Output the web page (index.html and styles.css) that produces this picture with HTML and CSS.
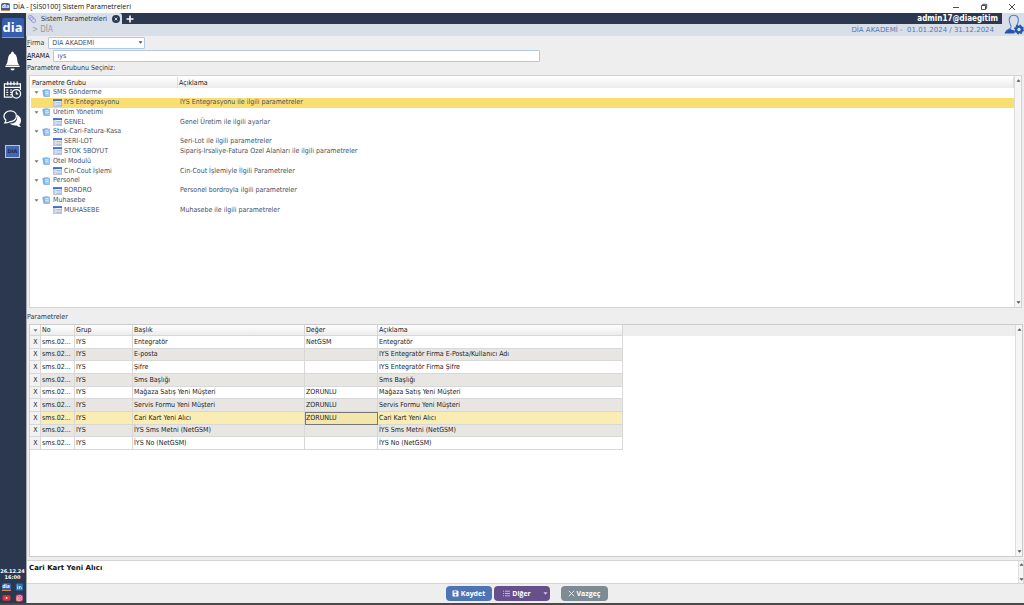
FILE: index.html
```html
<!DOCTYPE html>
<html lang="tr">
<head>
<meta charset="utf-8">
<title>DİA - [SİS0100] Sistem Parametreleri</title>
<link rel="stylesheet" href="styles.css">
</head>
<body>
<svg class="defs" aria-hidden="true">
  <symbol id="i-group" viewBox="0 0 8 8"><path d="M.3 1 5.500 .2 6.500 7 1.500 7.800z" fill="#7fb4ea"/><path d="M2 1h5.700v6.500H2.500z" fill="#9ccaf6" stroke="#5e97d8" stroke-width=".5"/><path d="M3.300 2.800h3M3.500 4.500h3" stroke="#e4f1fd" stroke-width=".8"/></symbol>
  <symbol id="i-table" viewBox="0 0 9 8"><path d="M.3.500h8.400v7.200H.3z" fill="#f2f5fb" stroke="#7f93c6" stroke-width=".6"/><path d="M0 .2h9v1.800H0z" fill="#3f6fd0"/><path d="M.6 2.200h2v5.200h-2z" fill="#c5cce0"/><path d="M3.200 3.500h5.200M3.200 5h5.200M3.200 6.500h5.200" stroke="#97a5cc" stroke-width=".7"/></symbol>
  <symbol id="i-down" viewBox="0 0 6 4"><path d="M.3.300h5.400L3 3.700z" fill="currentColor"/></symbol>
</svg>
<div class="app">
  <header class="titlebar">
    <span class="dia mini">dia</span>
    <h1>DİA - [SİS0100] Sistem Parametreleri</h1>
    <button class="win" aria-label="Simge durumuna küçült"><svg viewBox="0 0 8 8"><path d="M1 4.500h6"/></svg></button>
    <button class="win" aria-label="Önceki boyut"><svg viewBox="0 0 8 8"><path d="M1.500 2.500h4v4h-4zM2.700 2.500V1.300h4v4H5.500"/></svg></button>
    <button class="win" aria-label="Kapat"><svg viewBox="0 0 8 8"><path d="M1 1l6 6M7 1 1 7"/></svg></button>
  </header>
  <div class="frame">
    <nav class="side">
      <a href="#" class="dia logo">dia</a>
      <button aria-label="Bildirimler"><svg viewBox="0 0 20 22"><path d="M10 1q1.500 0 1.500 2 2.800 1 3.200 5.200.3 5.300 2.800 8v1.200h-15v-1.200q2.500-2.700 2.800-8Q5.700 4 8.500 3q0-2 1.500-2z" fill="#fff"/><path d="M2.500 15.700h15" stroke="#2b384f" stroke-width=".6"/><path d="M7.800 18.800a2.200 2.200 0 0 0 4.400 0z" fill="#fff"/></svg></button>
      <button aria-label="Takvim"><svg viewBox="0 0 20 20"><g fill="none" stroke="#fff" stroke-width="1.300"><path d="M18.300 10V3.500H1.500v14H10M1.500 7.300h16.800M5 1v4M8.300 1v4M11.600 1v4M15 1v4"/><path d="M3.500 10h2M7.500 10h2M3.500 12.500h2M7.500 12.500h2M3.500 15h2M7.500 15h2"/><circle cx="14" cy="14" r="4.500"/><path d="M14 11.500V14h2"/></g></svg></button>
      <button aria-label="Mesajlar"><svg viewBox="0 0 20 20"><path d="M14.500 5.500q4.500 2 4.500 6 0 2.500-1.800 4 .3 1.500 1.800 3-3 0-4.500-1.700-4.500.7-7.500-2 8 .2 8-7 0-1-.5-2.300z" fill="#fff"/><path d="M7.800 1.500c4 0 6.300 2.500 6.300 5.500s-3 6-6.500 5.700Q5 14.500 2 14q1.300-1.300 1-3Q1 9.500 1 7c0-3 3-5.500 6.800-5.500z" fill="#2b384f" stroke="#fff" stroke-width="1.300"/></svg></button>
      <button class="screen">DIA</button>
      <div class="clock">26.12.24<br>16:00</div>
      <div class="links">
        <a href="#" class="dia mini">dia</a>
        <a href="#" aria-label="LinkedIn"><svg class="ic9" viewBox="0 0 9 9"><rect x=".5" y=".5" width="8" height="8" rx="1" fill="#2873b5"/><path d="M2.500 3.700V7M2.500 2v.9M4.300 7V3.700M4.300 5q.2-1 1.200-1t1 1.200V7" fill="none" stroke="#fff" stroke-width=".9"/></svg></a>
        <a href="#" aria-label="YouTube"><svg class="ic9" viewBox="0 0 9 9"><rect y="1.300" width="9" height="6.400" rx="1.500" fill="#dc3535"/><path d="M3.700 3v3l2.500-1.500z" fill="#fff"/></svg></a>
        <a href="#" aria-label="Instagram"><svg class="ic9" viewBox="0 0 9 9"><linearGradient id="ig" x1="0" y1="1" x2="1" y2="0"><stop offset="0" stop-color="#f4a64a"/><stop offset=".5" stop-color="#dd3e6b"/><stop offset="1" stop-color="#9a42bd"/></linearGradient><rect x=".5" y=".5" width="8" height="8" rx="2" fill="url(#ig)"/><rect x="2" y="2" width="5" height="5" rx="1.400" fill="none" stroke="#fff" stroke-width=".6"/><circle cx="4.500" cy="4.500" r="1.100" fill="none" stroke="#fff" stroke-width=".6"/></svg></a>
      </div>
    </nav>
    <div class="work">
      <div class="top">
        <div class="bars">
          <div class="tabs">
            <div class="tab"><svg viewBox="0 0 9 9"><g fill="#e6e9fa" stroke="#7f86c8" stroke-width=".9"><rect x=".8" y=".8" width="4" height="3.600" rx=".8"/><rect x="2.500" y="2.500" width="4" height="3.600" rx=".8"/><rect x="4.300" y="4.500" width="4" height="3.600" rx=".8"/></g></svg><span>Sistem Parametreleri</span><button aria-label="Sekmeyi kapat"><svg viewBox="0 0 8 8"><circle cx="4" cy="4" r="4" fill="#2b384f"/><path d="M2.600 2.600l2.800 2.800M5.400 2.600 2.600 5.400" stroke="#dce3ee" stroke-width=".9"/></svg></button></div>
            <button class="plus" aria-label="Yeni sekme"><svg viewBox="0 0 8 8"><path d="M4 .5v7M.5 4h7" stroke="#fff" stroke-width="1.600"/></svg></button>
            <strong class="user">admin17@diaegitim</strong>
          </div>
          <div class="crumb"><span>&gt; DİA</span><span class="period">DİA AKADEMİ -&nbsp; 01.01.2024 / 31.12.2024</span></div>
        </div>
        <button class="account" aria-label="Kullanıcı ayarları"><svg viewBox="0 0 20 22"><path d="M6 9.500C4.500 6 5 1.200 9.800 1.200S15 6 13.700 9.500C13.200 11 12 12 12.300 13M6 9.500C7 11.500 7.800 13 6.500 14.300L2 17" fill="none" stroke="#5580c4" stroke-width="1.100"/><path d="M.5 19.500q.5-3 6-4.500 1.500 1.500 4 1v3.500z" fill="#2257a8"/><circle cx="15" cy="15.500" r="2.900" fill="none" stroke="#2257a8" stroke-width="2.400"/><circle cx="15" cy="15.500" r="4.300" fill="none" stroke="#2257a8" stroke-width="1.400" stroke-dasharray="1.700 1.680"/></svg></button>
      </div>
      <main class="content">
        <div class="field"><label for="firma"><u>F</u>irma</label><div class="combo"><select id="firma"><option>DİA AKADEMİ</option></select><svg class="arrow"><use href="#i-down"/></svg></div></div>
        <div class="field"><label for="arama" class="dark"><u>A</u>RAMA</label><input id="arama" type="text" value="ıys"></div>
        <h2 class="first">Parametre Grubunu Seçiniz:</h2>
        <section class="panel blue">
          <div class="view">
            <table class="tree">
              <colgroup><col class="c-name"><col></colgroup>
              <thead><tr><th>Parametre Grubu</th><th>Açıklama</th></tr></thead>
              <tbody>
                <tr class="g"><td><div><svg class="tw"><use href="#i-down"/></svg><svg class="ic8"><use href="#i-group"/></svg>SMS Gönderme</div></td><td></td></tr>
                <tr class="sel"><td><div><svg class="ic9"><use href="#i-table"/></svg>IYS Entegrasyonu</div></td><td>IYS Entegrasyonu ile ilgili parametreler</td></tr>
                <tr class="g"><td><div><svg class="tw"><use href="#i-down"/></svg><svg class="ic8"><use href="#i-group"/></svg>Üretim Yönetimi</div></td><td></td></tr>
                <tr><td><div><svg class="ic9"><use href="#i-table"/></svg>GENEL</div></td><td>Genel Üretim ile ilgili ayarlar</td></tr>
                <tr class="g"><td><div><svg class="tw"><use href="#i-down"/></svg><svg class="ic8"><use href="#i-group"/></svg>Stok-Cari-Fatura-Kasa</div></td><td></td></tr>
                <tr><td><div><svg class="ic9"><use href="#i-table"/></svg>SERİ-LOT</div></td><td>Seri-Lot ile ilgili parametreler</td></tr>
                <tr><td><div><svg class="ic9"><use href="#i-table"/></svg>STOK 5BOYUT</div></td><td>Sipariş-İrsaliye-Fatura Özel Alanları ile ilgili parametreler</td></tr>
                <tr class="g"><td><div><svg class="tw"><use href="#i-down"/></svg><svg class="ic8"><use href="#i-group"/></svg>Otel Modulü</div></td><td></td></tr>
                <tr><td><div><svg class="ic9"><use href="#i-table"/></svg>Cin-Cout İşlemi</div></td><td>Cin-Cout İşlemiyle İlgili Parametreler</td></tr>
                <tr class="g"><td><div><svg class="tw"><use href="#i-down"/></svg><svg class="ic8"><use href="#i-group"/></svg>Personel</div></td><td></td></tr>
                <tr><td><div><svg class="ic9"><use href="#i-table"/></svg>BORDRO</div></td><td>Personel bordroyla ilgili parametreler</td></tr>
                <tr class="g"><td><div><svg class="tw"><use href="#i-down"/></svg><svg class="ic8"><use href="#i-group"/></svg>Muhasebe</div></td><td></td></tr>
                <tr><td><div><svg class="ic9"><use href="#i-table"/></svg>MUHASEBE</div></td><td>Muhasebe ile ilgili parametreler</td></tr>
              </tbody>
            </table>
          </div>
          <div class="scroll"><svg class="up"><use href="#i-down"/></svg><svg><use href="#i-down"/></svg></div>
        </section>
        <h2 class="second">Parametreler</h2>
        <section class="panel">
          <div class="view gridview">
            <table class="grid">
              <colgroup><col class="c-x"><col class="c-no"><col class="c-grp"><col class="c-title"><col class="c-val"><col></colgroup>
              <thead><tr><th class="menu"><svg class="tw"><use href="#i-down"/></svg></th><th>No</th><th>Grup</th><th>Başlık</th><th>Değer</th><th>Açıklama</th></tr></thead>
              <tbody>
                <tr><th>X</th><td>sms.02...</td><td>IYS</td><td>Entegratör</td><td>NetGSM</td><td>Entegratör</td></tr>
                <tr><th>X</th><td>sms.02...</td><td>IYS</td><td>E-posta</td><td></td><td>IYS Entegratör Firma E-Posta/Kullanıcı Adı</td></tr>
                <tr><th>X</th><td>sms.02...</td><td>IYS</td><td>Şifre</td><td></td><td>IYS Entegratör Firma Şifre</td></tr>
                <tr><th>X</th><td>sms.02...</td><td>IYS</td><td>Sms Başlığı</td><td></td><td>Sms Başlığı</td></tr>
                <tr><th>X</th><td>sms.02...</td><td>IYS</td><td>Mağaza Satış Yeni Müşteri</td><td>ZORUNLU</td><td>Mağaza Satış Yeni Müşteri</td></tr>
                <tr><th>X</th><td>sms.02...</td><td>IYS</td><td>Servis Formu Yeni Müşteri</td><td>ZORUNLU</td><td>Servis Formu Yeni Müşteri</td></tr>
                <tr class="sel"><th>X</th><td>sms.02...</td><td>IYS</td><td>Cari Kart Yeni Alıcı</td><td class="focus">ZORUNLU</td><td>Cari Kart Yeni Alıcı</td></tr>
                <tr><th>X</th><td>sms.02...</td><td>IYS</td><td>İYS Sms Metni (NetGSM)</td><td></td><td>İYS Sms Metni (NetGSM)</td></tr>
                <tr><th>X</th><td>sms.02...</td><td>IYS</td><td>İYS No (NetGSM)</td><td></td><td>İYS No (NetGSM)</td></tr>
              </tbody>
            </table>
          </div>
          <div class="scroll"><svg class="up"><use href="#i-down"/></svg><svg><use href="#i-down"/></svg></div>
        </section>
        <section class="note"><strong>Cari Kart Yeni Alıcı</strong><div class="scroll"><svg class="up"><use href="#i-down"/></svg><svg><use href="#i-down"/></svg></div></section>
        <footer class="actions">
          <button class="save"><svg class="ic7" viewBox="0 0 7 7"><path d="M.5.500h5l1 1v5h-6z" fill="#fff"/><path d="M1.700 1.200h2.800v1.500H1.700z" fill="#4f74b3"/><circle cx="3.500" cy="4.700" r="1" fill="#4f74b3"/></svg>Kaydet</button>
          <button class="more"><svg class="ic7" viewBox="0 0 7 7"><path d="M0 1.200h1M0 3.500h1M0 5.800h1M2 1.200h5M2 3.500h5M2 5.800h5" stroke="#ddd5ea" stroke-width=".8"/></svg>Diğer<svg class="tw"><use href="#i-down"/></svg></button>
          <button class="cancel"><svg class="ic7" viewBox="0 0 7 7"><path d="M.8.800l5.400 5.400M6.200.800.8 6.200" stroke="#fff" stroke-width=".8"/></svg>Vazgeç</button>
        </footer>
      </main>
    </div>
  </div>
</div>
</body>
</html>
```
FILE: styles.css
```css
* { box-sizing: border-box; }
body {
  margin: 0;
  font: 7px/9px "DejaVu Sans Condensed", "Noto Sans", sans-serif;
  color: #3c3c3c;
  background: #eee;
}
button { border: 0; padding: 0; background: none; font: inherit; color: inherit; }
svg { display: block; flex: none; }
h1, h2 { margin: 0; font-size: 7px; font-weight: normal; }
.defs { display: none; }
.ic7 { width: 7px; height: 7px; }
.ic8 { width: 8px; height: 8px; }
.ic9 { width: 9px; height: 8px; }
.tw { width: 5px; height: 3px; color: #777; }
.dia { display: block; background: #345fae; border-bottom: 1px solid #d58a4a; border-radius: 2px 2px 0 0; color: #fff; text-align: center; text-decoration: none; }
.mini { width: 9px; height: 8px; font: bold 5px/7px "Open Sans", sans-serif; }

.app { display: flex; flex-direction: column; height: 100vh; border-bottom: 2px solid #4a4a4c; }
.titlebar { display: flex; align-items: center; height: 13px; padding: 0 8px 0 1px; background: #fff; }
.titlebar h1 { flex: 1; margin-left: 3px; font: 7px/12px "Open Sans", sans-serif; color: #111; }
.win { width: 8px; height: 8px; margin-left: 20px; }
.win svg { width: 8px; height: 8px; fill: none; stroke: #222; stroke-width: .8; }
.frame { display: flex; flex: 1; min-height: 0; }

.side { display: flex; flex-direction: column; align-items: center; width: 26px; padding-right: 1px; background: #2b384f; }
.side button svg { width: 19px; height: 22px; margin-bottom: 7px; }
.logo { width: 22px; height: 20px; margin: 5px 0 12px; font: bold 13px/18px "Open Sans", sans-serif; }
.screen { width: 15px; height: 13px; margin-top: 8px; border: 1px solid #b8c6e2; background: #4568ad; font: bold 5px/11px "DejaVu Sans", sans-serif; color: #1c2c50; }
.clock { margin-top: auto; font: bold 5px/6px "DejaVu Sans", sans-serif; color: #fff; text-align: center; }
.links { display: grid; grid-template-columns: 9px 9px; gap: 3px 4px; padding: 3px 0 1px; }

.work { display: flex; flex: 1; flex-direction: column; min-width: 0; }
.top { display: flex; background: #d8dfe9; }
.bars { flex: 1; }
.tabs { display: flex; align-items: center; height: 11px; background: #2b384f; }
.tab { display: flex; align-items: center; gap: 5px; height: 11px; padding: 0 2px; background: #d8dfe9; border-radius: 0 3px 0 0; color: #333; }
.tab span { padding-top: 1px; }
.tab svg { width: 8px; height: 8px; }
.plus { margin-left: 4px; }
.plus svg { width: 8px; height: 8px; }
.user { margin-left: auto; padding-right: 4px; font: bold 8px/10px "DejaVu Sans Condensed", sans-serif; color: #fff; }
.crumb { display: flex; justify-content: space-between; height: 12px; padding: 0 8px 0 6px; font-size: 8px; line-height: 11px; color: #999; }
.period { font: 7px/12px "DejaVu Sans", sans-serif; color: #5377b4; }
.account { width: 22px; background: #d8dfe9; }
.account svg { width: 20px; height: 22px; margin-left: 2px; }

.content { display: flex; flex: 1; flex-direction: column; min-height: 0; border-left: 1px solid #a5a9b0; }
.field { display: flex; align-items: center; gap: 4px; height: 13px; }
.field label { padding-top: 1px; }
.dark { color: #111; }
.combo { display: flex; align-items: center; position: relative; width: 97px; }
.field select, .field input { height: 12px; border: 1px solid #b3c8e5; border-radius: 1px; padding: 1px 3px 0; background: #fff; font: inherit; color: #44506a; }
.field select { width: 100%; appearance: none; }
.field input { width: 487px; }
.arrow { position: absolute; right: 2px; width: 5px; height: 3px; color: #555; }
h2 { line-height: 11px; color: #333; }
h2.first { padding-top: 1px; margin-bottom: 1px; }
h2.second { padding: 4px 0 1px; }

.panel { display: flex; flex: 1; min-height: 0; margin: 0 1px 0 2px; border: 1px solid #ccc; background: #fff; }
.blue { margin-right: 2px; border-color: #c5d7ef; }
.view { flex: 1; min-width: 0; overflow: hidden; padding: 1px 0 0 1px; }
.scroll { display: flex; flex-direction: column; justify-content: space-between; align-items: center; width: 7px; padding: 3px 0; border-left: 1px solid #ddd; background: #f5f5f5; color: #555; }
.scroll svg { width: 5px; height: 3px; }
.up { transform: rotate(180deg); }
table { table-layout: fixed; border-collapse: separate; border-spacing: 0; }
td, th { padding: 0; overflow: hidden; white-space: nowrap; text-align: left; font-weight: normal; }
thead th { background: linear-gradient(#fff, #ececec); color: #222; }

.tree { width: 100%; height: 138px; }
.tree .c-name { width: 147px; }
.tree thead tr { height: 11px; }
.tree th { padding: 1px 0 0 1px; border-right: 1px solid #ddd; }
.tree td { color: #465064; }
.tree td:last-child { padding-left: 2px; }
.tree td div { display: flex; align-items: center; gap: 2px; padding-left: 22px; }
.tree .g td div { gap: 3px; padding-left: 3px; }
.tree .sel td { background: #f9df72; }

.view.gridview { padding: 0; background: linear-gradient(#eee 11px, #fff 11px); }
.grid { width: 593px; height: 125px; }
.grid thead tr { height: 11px; }
.c-x { width: 11px; }
.c-no { width: 34px; }
.c-grp { width: 58px; }
.c-title { width: 172px; }
.c-val { width: 73px; }
.grid td, .grid th { padding-left: 1px; border-right: 1px solid #d8d8d8; border-bottom: 1px solid #d8d8d8; color: #222; }
.grid thead th, .grid tbody td, .grid tbody th { padding-top: 1px; }
.grid tbody th { background: #f2f2f2; text-align: center; }
.grid .menu .tw { margin: 0 auto; }
.grid tbody tr:nth-child(even) td { background: #e8e6e2; }
.grid tbody tr.sel td { background: #faedb4; }
.grid tbody tr.sel .focus { background: #f2e6ac; outline: 1px solid #777; outline-offset: -1px; }

.note { display: flex; justify-content: space-between; height: 24px; margin-top: 3px; border: 1px solid #d5d5d5; border-left: 0; background: #fff; }
.note strong { padding: 2px; font: bold 7px/10px "DejaVu Sans", sans-serif; color: #111; }
.note .scroll { width: 5px; padding: 2px 0; }
.actions { display: flex; justify-content: center; gap: 2px; padding: 2px 0 2px 2px; }
.actions button { display: flex; align-items: center; justify-content: center; gap: 2px; height: 15px; border-radius: 4px; font: bold 7px/9px "Open Sans", sans-serif; color: #fff; }
.actions .save { width: 46px; background: #4f74b3; }
.actions .more { width: 56px; padding-left: 8px; background: #65508c; }
.more .tw { margin-left: 10px; color: #d5cce5; }
.actions .cancel { width: 47px; margin-left: 9px; background: #7d8c94; }
```
